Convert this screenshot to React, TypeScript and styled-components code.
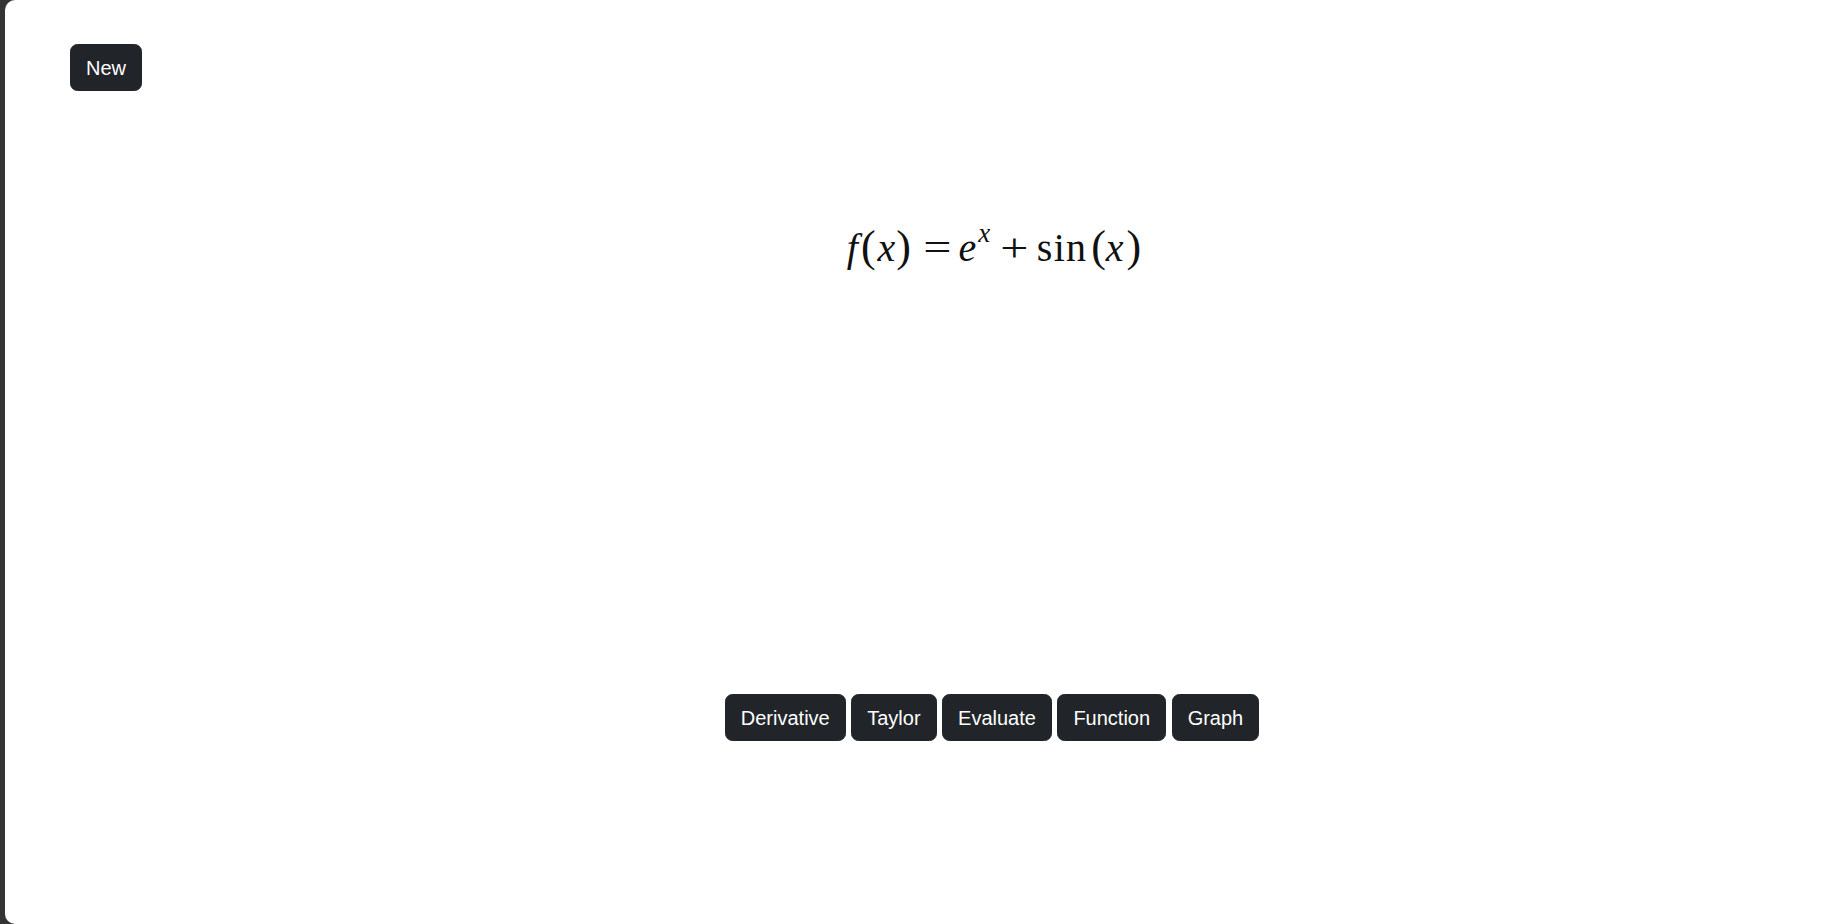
import React from "react";
import styled, { createGlobalStyle } from "styled-components";

const Global = createGlobalStyle`
  html, body { margin: 0; padding: 0; height: 100%; }
  body { background: #343434; font-family: "Liberation Sans", Arial, sans-serif; }
  #root { height: 100%; }
`;

const Shell = styled.div`
  height: 924px;
  padding-left: 5px;
  box-sizing: border-box;
  display: flex;
`;

const Panel = styled.main`
  flex: 1;
  background: #fff;
  border-radius: 10px 0 0 10px;
  display: grid;
  grid-template-columns: 133px 1fr;
`;

const Side = styled.aside`
  padding: 44px 0 0 65px;
`;

const Main = styled.section`
  display: flex;
  flex-direction: column;
  align-items: center;
`;

const Button = styled.button`
  font-family: "Liberation Sans", Arial, sans-serif;
  font-size: 20px;
  line-height: 30px;
  color: #fff;
  background: #212529;
  border: 1.25px solid #212529;
  border-radius: 7.5px;
  padding: 7.5px 15px;
  cursor: pointer;
  white-space: nowrap;
`;

const Formula = styled.div`
  margin-top: 217px;
  padding-left: 4px;
  font-family: "Liberation Serif", "Times New Roman", serif;
  font-size: 40px;
  line-height: 60px;
  height: 60px;
  color: #111;
  display: flex;
  align-items: baseline;
`;

const I = styled.span<{ $l?: number; $r?: number }>`
  font-style: italic;
  margin-left: ${(p) => p.$l ?? 0}px;
  margin-right: ${(p) => p.$r ?? 0}px;
`;

const Fn = styled.span`
  letter-spacing: 1.2px;
`;

const Paren = styled.span<{ $l?: number }>`
  font-size: 44px;
  margin-left: ${(p) => p.$l ?? 0}px;
`;

const Op = styled.span<{ $l?: number; $r?: number }>`
  display: inline-block;
  transform: scaleX(1.25);
  margin-left: ${(p) => p.$l ?? 0}px;
  margin-right: ${(p) => p.$r ?? 0}px;
`;

const Sup = styled.span<{ $l?: number }>`
  font-style: italic;
  font-size: 27px;
  line-height: 0;
  position: relative;
  top: -19px;
  margin-left: ${(p) => p.$l ?? 0}px;
`;

const Toolbar = styled.div`
  margin-top: 417px;
  display: flex;
  gap: 5.5px;
`;

const tools = ["Derivative", "Taylor", "Evaluate", "Function", "Graph"];

export default function App() {
  return (
    <>
      <Global />
      <Shell>
        <Panel>
          <Side>
            <Button>New</Button>
          </Side>
          <Main>
            <Formula>
              <I>f</I>
              <Paren $l={3}>(</Paren>
              <I $l={2}>x</I>
              <Paren $l={1}>)</Paren>
              <Op $l={15} $r={10}>=</Op>
              <I>e</I>
              <Sup $l={2}>x</Sup>
              <Op $l={13} $r={11}>+</Op>
              <Fn>sin</Fn>
              <Paren $l={4}>(</Paren>
              <I>x</I>
              <Paren $l={3}>)</Paren>
            </Formula>
            <Toolbar>
              {tools.map((t) => (
                <Button key={t}>{t}</Button>
              ))}
            </Toolbar>
          </Main>
        </Panel>
      </Shell>
    </>
  );
}
